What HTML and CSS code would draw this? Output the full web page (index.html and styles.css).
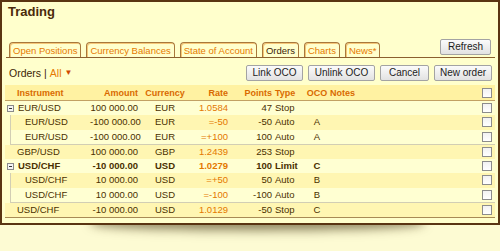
FILE: index.html
```html
<!DOCTYPE html>
<html>
<head>
<meta charset="utf-8">
<title>Trading</title>
<link rel="stylesheet" href="styles.css">
</head>
<body>
<div class="panel">
  <h1 class="title">Trading</h1>

  <div class="tabbar">
    <div class="tabs">
      <span class="tab">Open Positions</span>
      <span class="tab">Currency Balances</span>
      <span class="tab">State of Account</span>
      <span class="tab active">Orders</span>
      <span class="tab">Charts</span>
      <span class="tab">News*</span>
    </div>
    <button class="btn btn-refresh">Refresh</button>
  </div>

  <div class="toolbar">
    <div class="crumb">
      <span class="crumb-title">Orders</span>
      <span class="crumb-sep">|</span>
      <span class="crumb-filter">All</span>
      <span class="crumb-caret">&#9660;</span>
    </div>
    <div class="actions">
      <button class="btn btn-link">Link OCO</button>
      <button class="btn btn-unlink">Unlink OCO</button>
      <button class="btn btn-cancel">Cancel</button>
      <button class="btn btn-new">New order</button>
    </div>
  </div>

  <div class="grid">
    <div class="row head">
      <span class="c-inst pad-top">Instrument</span>
      <span class="c-amt">Amount</span>
      <span class="c-cur">Currency</span>
      <span class="c-rate">Rate</span>
      <span class="c-pts">Points</span>
      <span class="c-type">Type</span>
      <span class="c-oco">OCO</span>
      <span class="c-notes">Notes</span>
      <span class="c-chk"><span class="chk"></span></span>
    </div>

    <div class="row odd">
      <span class="c-inst pad-parent"><span class="toggle"></span>EUR/USD</span>
      <span class="c-amt">100 000.00</span>
      <span class="c-cur">EUR</span>
      <span class="c-rate">1.0584</span>
      <span class="c-pts">47</span>
      <span class="c-type">Stop</span>
      <span class="c-oco"></span>
      <span class="c-notes"></span>
      <span class="c-chk"><span class="chk"></span></span>
    </div>
    <div class="group">
      <div class="row child even">
        <span class="c-inst pad-child">EUR/USD</span>
        <span class="c-amt">-100 000.00</span>
        <span class="c-cur">EUR</span>
        <span class="c-rate">=-50</span>
        <span class="c-pts">-50</span>
        <span class="c-type">Auto</span>
        <span class="c-oco">A</span>
        <span class="c-notes"></span>
        <span class="c-chk"><span class="chk"></span></span>
      </div>
      <div class="row child odd">
        <span class="c-inst pad-child">EUR/USD</span>
        <span class="c-amt">-100 000.00</span>
        <span class="c-cur">EUR</span>
        <span class="c-rate">=+100</span>
        <span class="c-pts">100</span>
        <span class="c-type">Auto</span>
        <span class="c-oco">A</span>
        <span class="c-notes"></span>
        <span class="c-chk"><span class="chk"></span></span>
      </div>
    </div>

    <div class="row even">
      <span class="c-inst pad-top">GBP/USD</span>
      <span class="c-amt">100 000.00</span>
      <span class="c-cur">GBP</span>
      <span class="c-rate">1.2439</span>
      <span class="c-pts">253</span>
      <span class="c-type">Stop</span>
      <span class="c-oco"></span>
      <span class="c-notes"></span>
      <span class="c-chk"><span class="chk"></span></span>
    </div>

    <div class="row odd bold">
      <span class="c-inst pad-parent"><span class="toggle"></span>USD/CHF</span>
      <span class="c-amt">-10 000.00</span>
      <span class="c-cur">USD</span>
      <span class="c-rate">1.0279</span>
      <span class="c-pts">100</span>
      <span class="c-type">Limit</span>
      <span class="c-oco">C</span>
      <span class="c-notes"></span>
      <span class="c-chk"><span class="chk"></span></span>
    </div>
    <div class="group">
      <div class="row child even">
        <span class="c-inst pad-child">USD/CHF</span>
        <span class="c-amt">10 000.00</span>
        <span class="c-cur">USD</span>
        <span class="c-rate">=+50</span>
        <span class="c-pts">50</span>
        <span class="c-type">Auto</span>
        <span class="c-oco">B</span>
        <span class="c-notes"></span>
        <span class="c-chk"><span class="chk"></span></span>
      </div>
      <div class="row child odd">
        <span class="c-inst pad-child">USD/CHF</span>
        <span class="c-amt">10 000.00</span>
        <span class="c-cur">USD</span>
        <span class="c-rate">=-100</span>
        <span class="c-pts">-100</span>
        <span class="c-type">Auto</span>
        <span class="c-oco">B</span>
        <span class="c-notes"></span>
        <span class="c-chk"><span class="chk"></span></span>
      </div>
    </div>

    <div class="row even">
      <span class="c-inst pad-top">USD/CHF</span>
      <span class="c-amt">-10 000.00</span>
      <span class="c-cur">USD</span>
      <span class="c-rate">1.0129</span>
      <span class="c-pts">-50</span>
      <span class="c-type">Stop</span>
      <span class="c-oco">C</span>
      <span class="c-notes"></span>
      <span class="c-chk"><span class="chk"></span></span>
    </div>
  </div>
</div>
</body>
</html>
```

FILE: styles.css
```css
* { box-sizing: border-box; }

html, body {
  margin: 0;
  padding: 0;
}

body {
  width: 500px;
  height: 251px;
  overflow: hidden;
  background: #fdfbd3;
  font-family: "Liberation Sans", Arial, sans-serif;
  color: #4a3000;
}

.panel {
  position: relative;
  width: 500px;
  height: 225px;
  border: 2px solid #5a3512;
  background: #ffffcc;
  padding: 0 3px;
}

.panel::after {
  content: "";
  position: absolute;
  left: 90px;
  right: 75px;
  bottom: 2px;
  height: 14px;
  border-radius: 0 0 50% 50%;
  box-shadow: 0 9px 11px rgba(60, 45, 10, 0.62);
  z-index: -1;
}

.title {
  margin: 0;
  height: 37px;
  padding: 2px 0 0 3px;
  font-size: 13px;
  line-height: 15px;
  font-weight: bold;
  color: #4a2a0a;
}

/* tabs */
.tabbar {
  display: flex;
  align-items: flex-end;
  justify-content: space-between;
  height: 19px;
  margin-left: 1px;
  padding: 0 4px 0 3px;
  border-bottom: 1px solid #8b5f2e;
}

.tabs {
  display: flex;
  gap: 5px;
}

.tab {
  height: 15px;
  padding: 0 3px;
  border: 1px solid #a8783c;
  border-bottom: none;
  border-radius: 4px 4px 0 0;
  box-shadow: inset 1px 1px 0 #f5c777;
  font-size: 9.5px;
  line-height: 15px;
  color: #e67a00;
  white-space: nowrap;
}

.tab.active {
  color: #3c2406;
}

/* buttons */
.btn {
  height: 16px;
  padding: 0;
  border: 1px solid #a3a3a3;
  border-radius: 2px;
  background: linear-gradient(#fbfbfb, #e2e2e2);
  font-family: inherit;
  font-size: 10px;
  line-height: 14px;
  color: #1c1c1c;
  text-align: center;
}

.btn-refresh { width: 51px; margin-bottom: 2px; }
.btn-link { width: 57px; }
.btn-unlink { width: 67px; }
.btn-cancel { width: 49px; }
.btn-new { width: 58px; }

/* toolbar */
.toolbar {
  display: flex;
  align-items: center;
  justify-content: space-between;
  height: 27px;
  padding: 6px 3px 4px 4px;
}

.crumb {
  font-size: 10.5px;
  display: flex;
  align-items: center;
  gap: 3px;
}

.crumb-title { color: #3c2406; }
.crumb-sep { color: #3c2406; }
.crumb-filter { color: #e67a00; }
.crumb-caret { color: #d04a00; font-size: 8px; }

.actions {
  display: flex;
  gap: 5px;
}

/* grid */
.grid {
  border-bottom: 1px solid #a88a55;
}

.row {
  display: grid;
  grid-template-columns: 85px 50px 50px 40px 43px 33px 22px 1fr 17px;
  align-items: center;
  height: 14.25px;
  font-size: 9.5px;
  line-height: 12px;
  white-space: nowrap;
}

.row.child {
  grid-template-columns: 79px 50px 50px 40px 43px 33px 22px 1fr 17px;
}

.row.odd { background: #ffffd2; }
.row.even { background: #fff6b2; }
.row.bold { font-weight: bold; }

.row.head {
  height: 16px;
  background: #fff2a2;
  border-bottom: 1px solid #c2a164;
  font-size: 9px;
  font-weight: bold;
  color: #d96a00;
}

.group {
  margin-left: 5px;
  border-left: 1px solid #d2ceb4;
  border-bottom: 1px solid #d2ceb4;
}

.c-inst { display: flex; align-items: center; }
.pad-top { padding-left: 12px; }
.pad-parent { padding-left: 2px; }
.pad-child { padding-left: 14px; }

.c-amt { text-align: right; padding-right: 2px; }
.c-cur { text-align: center; }
.c-rate { text-align: right; padding-right: 2px; color: #e47800; }
.row.head .c-rate { color: #d96a00; }
.c-pts { text-align: right; padding-right: 1px; }
.c-type { padding-left: 2px; }
.c-oco { text-align: center; }
.c-notes { padding-left: 2px; }
.c-chk { display: flex; justify-content: center; }

.chk {
  display: block;
  width: 10px;
  height: 10px;
  border: 1px solid #8c8c8c;
  background: linear-gradient(#f2f2f2, #ffffff);
}

.toggle {
  display: block;
  position: relative;
  width: 7px;
  height: 7px;
  margin-right: 4px;
  border: 1px solid #8a8a8a;
  background: #f4f4f4;
}

.toggle::before {
  content: "";
  position: absolute;
  left: 1px;
  right: 1px;
  top: 2px;
  height: 1px;
  background: #333;
}
```
